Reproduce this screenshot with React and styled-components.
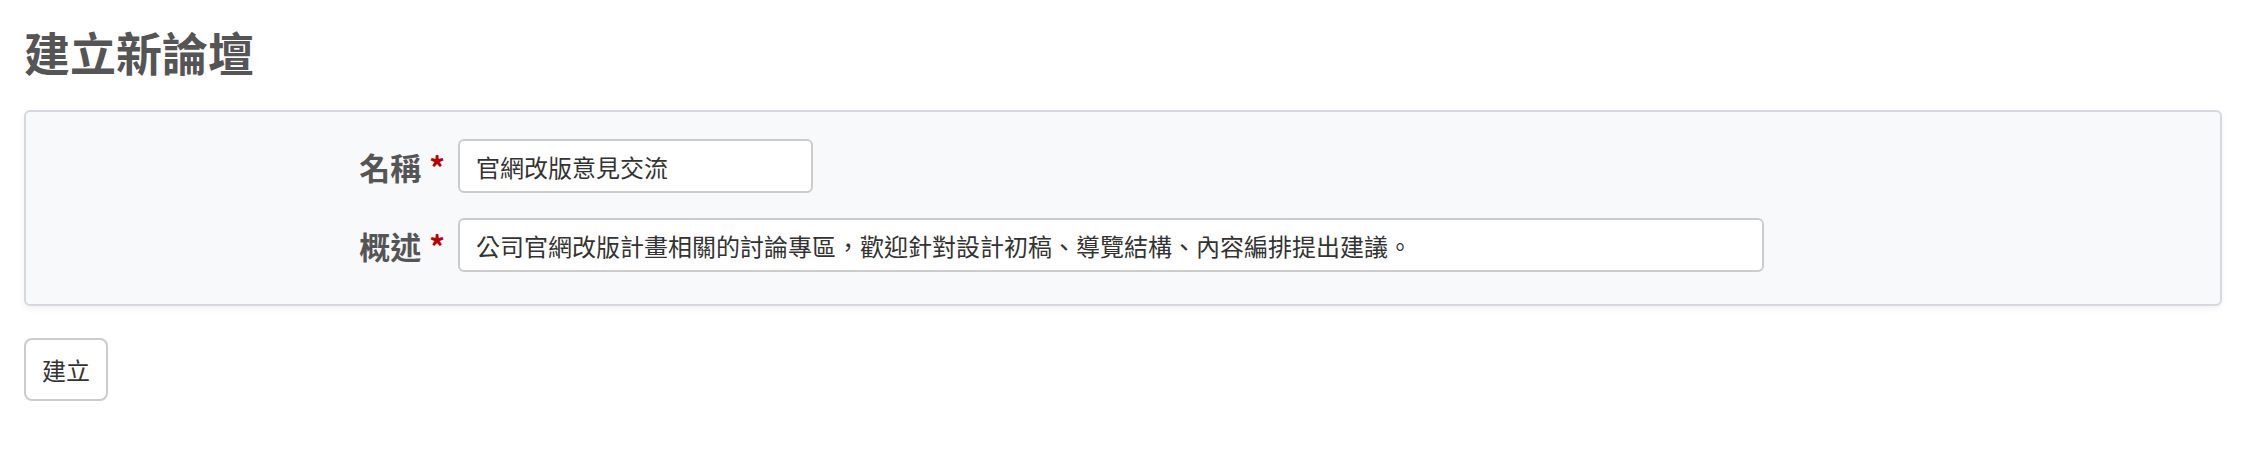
import React from 'react';
import styled, { createGlobalStyle } from 'styled-components';

const GlobalStyle = createGlobalStyle`
  body {
    margin: 0;
    background: #ffffff;
    font-family: "Noto Sans CJK TC", "Noto Sans", "Liberation Sans", sans-serif;
    color: #333;
  }
`;

const Page = styled.div`
  padding: 20px 26px 40px 24px;
`;

const Title = styled.h2`
  margin: 0 0 28px;
  font-size: 46px;
  line-height: 62px;
  font-weight: 700;
  color: #555;
`;

const Box = styled.div`
  background: #f8f9fa;
  border: 2px solid #d5d8de;
  border-radius: 6px;
  box-shadow: 0 3px 6px rgba(0, 0, 0, 0.05);
  padding: 27px 0 32px;
  display: flex;
  flex-direction: column;
  gap: 25px;
`;

const Row = styled.div`
  display: flex;
  align-items: center;
  gap: 13px;
`;

const Label = styled.label`
  width: 419px;
  text-align: right;
  font-size: 31px;
  font-weight: 700;
  color: #555;
`;

const Required = styled.span`
  color: #bb0000;
  margin-left: 8px;
`;

const Input = styled.input`
  box-sizing: border-box;
  width: ${(p) => p.$width}px;
  height: 54px;
  padding: 0 16px;
  border: 2px solid #cccccc;
  border-radius: 6px;
  background: #fff;
  font-family: inherit;
  font-size: 24px;
  color: #333;
  outline: none;
`;

const Button = styled.button`
  margin-top: 32px;
  box-sizing: border-box;
  width: 84px;
  height: 63px;
  border: 2px solid #cccccc;
  border-radius: 8px;
  background: #fff;
  font-family: inherit;
  font-size: 24px;
  color: #333;
  padding: 0;
  cursor: pointer;
`;

export default function App() {
  return (
    <>
      <GlobalStyle />
      <Page>
        <Title>建立新論壇</Title>
        <Box>
          <Row>
            <Label>
              名稱<Required>*</Required>
            </Label>
            <Input $width={355} defaultValue="官網改版意見交流" />
          </Row>
          <Row>
            <Label>
              概述<Required>*</Required>
            </Label>
            <Input
              $width={1306}
              defaultValue="公司官網改版計畫相關的討論專區，歡迎針對設計初稿、導覽結構、內容編排提出建議。"
            />
          </Row>
        </Box>
        <Button>建立</Button>
      </Page>
    </>
  );
}
